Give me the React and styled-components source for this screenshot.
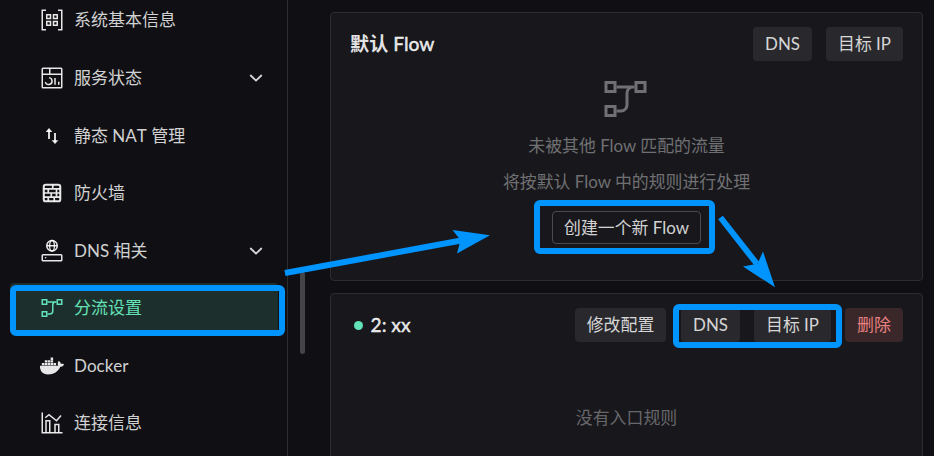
import React from "react";
import styled, { createGlobalStyle } from "styled-components";
import { FaDocker } from "react-icons/fa";

const GlobalStyle = createGlobalStyle`
  * { box-sizing: border-box; }
  body {
    margin: 0;
    background: #101014;
    overflow: hidden;
    font-family: Lato, "Noto Sans CJK SC", sans-serif;
    font-size: 16.9px;
    color: rgba(255, 255, 255, 0.82);
  }
`;

const Page = styled.div`
  position: relative;
  display: flex;
  width: 934px;
  height: 456px;
  overflow: hidden;
`;

const Sidebar = styled.nav`
  flex: none;
  width: 288px;
  border-right: 1px solid #2d2d30;
  overflow: hidden;
`;

const Menu = styled.div`
  display: flex;
  flex-direction: column;
  gap: 7.2px;
  margin: -4.8px 9.4px 0 9.6px;
`;

const MenuItem = styled.div`
  display: flex;
  align-items: center;
  flex: none;
  height: 50.4px;
  padding: 0 14.500px 0 30.4px;
  border-radius: 4px;
  color: ${(p) => (p.$active ? "#63e2b7" : "rgba(255,255,255,0.82)")};
  background: ${(p) => (p.$active ? "#1d2f2c" : "transparent")};
`;

const MenuIcon = styled.span`
  display: flex;
  width: 24px;
  height: 24px;
  margin-right: 10px;
  color: ${(p) => (p.$active ? "#63e2b7" : "rgba(255,255,255,0.9)")};
`;

const MenuLabel = styled.span`
  flex: 1;
  white-space: nowrap;
  line-height: 24px;
  font-size: 17px;
  font-kerning: none;
`;

const Content = styled.main`
  flex: 1;
  display: flex;
  padding: 12px 11px 0 12px;
`;

const ScrollTrack = styled.div`
  flex: none;
  width: 5px;
  height: 342px;
  display: flex;
  align-items: flex-end;
`;

const ScrollThumb = styled.div`
  width: 5px;
  height: 82px;
  border-radius: 3px;
  background: #454548;
`;

const Cards = styled.div`
  flex: 1;
  display: flex;
  flex-direction: column;
  gap: 12px;
  margin-left: 25px;
`;

const Card = styled.section`
  flex: none;
  display: flex;
  flex-direction: column;
  height: 269px;
  border: 1px solid #2d2d30;
  border-radius: 4px;
  background: #18181c;
  padding: 14px 19px 0;
`;

const CardHeader = styled.header`
  display: flex;
  align-items: center;
  height: 34px;
`;

const CardTitle = styled.h2`
  flex: 1;
  display: flex;
  align-items: center;
  margin: 0;
  font-size: 19.2px;
  font-weight: 500;
  line-height: 30px;
  white-space: pre;
  color: rgba(255, 255, 255, 0.9);
  -webkit-text-stroke: 0.35px currentColor;
`;

const Strong = styled.span`
  font-weight: 700;
  -webkit-text-stroke: 0;
`;

const StatusDot = styled.span`
  width: 9px;
  height: 9px;
  margin: 1px 7.500px 0 4px;
  border-radius: 50%;
  background: #63e2b7;
`;

const Actions = styled.div`
  display: flex;
  gap: 14px;
`;

const Button = styled.button`
  height: ${(p) => (p.$outlined ? "33px" : "34px")};
  width: ${(p) => p.$width}px;
  padding: 0;
  border: ${(p) => (p.$outlined ? "1px solid #4b4b4e" : "0")};
  border-radius: 4px;
  font: inherit;
  line-height: 24px;
  white-space: nowrap;
  color: ${(p) => (p.$danger ? "#e88080" : "rgba(255,255,255,0.82)")};
  background: ${(p) => (p.$outlined ? "transparent" : p.$danger ? "#39272a" : "#29292d")};
`;

const EditButton = styled(Button)`
  margin-right: 1px;
`;

const Empty = styled.div`
  display: flex;
  flex-direction: column;
  align-items: center;
  color: #707073;
  margin-top: 14px;
`;

const EmptyIcon = styled.span`
  display: flex;
  width: 48px;
  height: 48px;
  margin: 0 1px 5px 0;
  transform: translateX(-0.500px);
`;

const EmptyLine = styled.p`
  margin: 0;
  line-height: 36px;
  white-space: nowrap;
`;

const CreateRow = styled.div`
  display: flex;
  margin-top: 11px;
`;

const EmptyNote = styled.p`
  margin: 58px 0 0;
  line-height: 36px;
  text-align: center;
  color: #67676b;
`;

const Annotations = styled.svg`
  position: absolute;
  inset: 0;
  pointer-events: none;
`;

const Svg = ({ children }) => (
  <svg width="100%" height="100%" viewBox="0 0 32 32" fill="none" stroke="currentColor" strokeWidth="2">
    {children}
  </svg>
);

const SystemIcon = () => (
  <Svg>
    <path d="M8 3H3v26h5M24 3h5v26h-5" />
    <path d="M9 9h5v5H9zM18 9h5v5h-5zM9 18h5v5H9zM18 18h5v5h-5z" />
  </Svg>
);

const DashboardIcon = () => (
  <Svg>
    <rect x="3" y="3" width="26" height="26" rx="1" />
    <path d="M3 11h26M13 3v8M20 16v9M25 21v4" />
    <path d="M12 15.5a4.6 4.6 0 1 1-4.9 6" />
  </Svg>
);

const NatIcon = () => (
  <Svg>
    <path d="M12 20V8" strokeWidth="2.5" />
    <path d="M7.5 10.5 12 5.3l4.500 5.200zM15.500 21.500 20 26.700l4.500-5.200z" fill="currentColor" stroke="none" />
    <path d="M20 12v12" strokeWidth="2.500" />
  </Svg>
);

const FirewallIcon = () => (
  <Svg>
    <rect x="5" y="5" width="22" height="22" rx="2.500" strokeWidth="2.700" />
    <path
      d="M5 10.500h22M5 16h22M5 21.500h22M17 5v5.500M11 10.500V16M22 10.500V16M15 16v5.500M22 16v5.500M11 21.500V27M19 21.500V27"
      strokeWidth="2.300"
    />
  </Svg>
);

const DnsIcon = () => (
  <Svg>
    <circle cx="16" cy="9" r="7" />
    <ellipse cx="16" cy="9" rx="3.200" ry="7" strokeWidth="1.700" />
    <path d="M9 9h14" />
    <rect x="3" y="21" width="26" height="8" rx="1" />
    <circle cx="7.500" cy="25" r="1.100" fill="currentColor" stroke="none" />
  </Svg>
);

const FlowIcon = () => (
  <Svg>
    <path d="M3 5h6v6H3zM23 5h6v6h-6zM3 21h6v6H3z" />
    <path d="M10 8h12M10 24h3a4 4 0 0 0 4-4v-8a4 4 0 0 1 4-4" />
  </Svg>
);

const DockerIcon = () => <FaDocker size={24} />;

const ChartIcon = () => (
  <Svg>
    <path d="M3 2v27h27" />
    <path d="M8 29V13h5v16M20 29V18h5v11" />
    <path d="M7 9l5-4 10 8 6-7" />
  </Svg>
);

const Chevron = () => (
  <svg width="14" height="14" viewBox="0 0 14 14" fill="none" stroke="#d5d5d6" strokeWidth="1.800" strokeLinecap="round" strokeLinejoin="round">
    <path d="M1.700 4.500 7 9.600l5.300-5.100" />
  </svg>
);

const items = [
  { label: "系统基本信息", icon: SystemIcon },
  { label: "服务状态", icon: DashboardIcon, expandable: true },
  { label: "静态 NAT 管理", icon: NatIcon },
  { label: "防火墙", icon: FirewallIcon },
  { label: "DNS 相关", icon: DnsIcon, expandable: true },
  { label: "分流设置", icon: FlowIcon, active: true },
  { label: "Docker", icon: DockerIcon },
  { label: "连接信息", icon: ChartIcon },
];

export default function App() {
  return (
    <>
      <GlobalStyle />
      <Page>
        <Sidebar>
          <Menu>
            {items.map(({ label, icon: Icon, active, expandable }) => (
              <MenuItem key={label} $active={active}>
                <MenuIcon $active={active}>
                  <Icon />
                </MenuIcon>
                <MenuLabel>{label}</MenuLabel>
                {expandable && <Chevron />}
              </MenuItem>
            ))}
          </Menu>
        </Sidebar>
        <Content>
          <ScrollTrack>
            <ScrollThumb />
          </ScrollTrack>
          <Cards>
            <Card>
              <CardHeader>
                <CardTitle>
                  <Strong>默认</Strong> Flow
                </CardTitle>
                <Actions>
                  <Button $width={59}>DNS</Button>
                  <Button $width={77}>目标 IP</Button>
                </Actions>
              </CardHeader>
              <Empty>
                <EmptyIcon>
                  <FlowIcon />
                </EmptyIcon>
                <EmptyLine>未被其他 Flow 匹配的流量</EmptyLine>
                <EmptyLine>将按默认 Flow 中的规则进行处理</EmptyLine>
                <CreateRow>
                  <Button $outlined $width={149}>创建一个新 Flow</Button>
                </CreateRow>
              </Empty>
            </Card>
            <Card>
              <CardHeader>
                <CardTitle>
                  <StatusDot />
                  2: xx
                </CardTitle>
                <Actions>
                  <EditButton $width={91}>修改配置</EditButton>
                  <Button $width={59}>DNS</Button>
                  <Button $width={77}>目标 IP</Button>
                  <Button $danger $width={58}>删除</Button>
                </Actions>
              </CardHeader>
              <EmptyNote>没有入口规则</EmptyNote>
            </Card>
          </Cards>
        </Content>
        <Annotations width="934" height="456" viewBox="0 0 934 456" fill="none" stroke="#0094ff" strokeWidth="6">
          <rect x="13" y="288" width="269" height="45" rx="3" />
          <rect x="537" y="203" width="175" height="48" rx="3" />
          <rect x="676" y="307" width="163" height="38" rx="3" />
          <path d="M285 273 464 240M720.500 217.500 757 264" />
          <path d="M490 235.300 452.500 230l8 10-3.500 13.500zM775 287.300 763 251.500l-5.500 12.300-14.500 2.700z" fill="#0094ff" stroke="none" />
        </Annotations>
      </Page>
    </>
  );
}
